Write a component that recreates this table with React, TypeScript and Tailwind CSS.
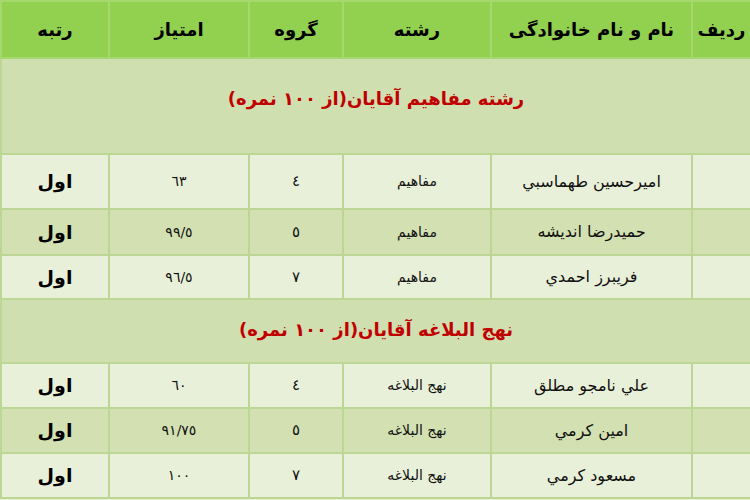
import React from "react";

const rows1 = [
  { name: "امیرحسین طهماسبي", field: "مفاهیم", group: "٤", score: "٦٣", rank: "اول", bg: "bg-[#e9f0d9]", h: "h-[55px]" },
  { name: "حمیدرضا اندیشه", field: "مفاهیم", group: "٥", score: "٩٩/٥", rank: "اول", bg: "bg-[#d2e0b2]", h: "h-[46px]" },
  { name: "فریبرز احمدي", field: "مفاهیم", group: "٧", score: "٩٦/٥", rank: "اول", bg: "bg-[#e9f0d9]", h: "h-[44px]" },
];
const rows2 = [
  { name: "علي نامجو مطلق", field: "نهج البلاغه", group: "٤", score: "٦٠", rank: "اول", bg: "bg-[#e9f0d9]", h: "h-[45px]" },
  { name: "امین کرمي", field: "نهج البلاغه", group: "٥", score: "٩١/٧٥", rank: "اول", bg: "bg-[#d2e0b2]", h: "h-[45px]" },
  { name: "مسعود کرمي", field: "نهج البلاغه", group: "٧", score: "١٠٠", rank: "اول", bg: "bg-[#e9f0d9]", h: "h-[45px]" },
];

const td = "border-2 border-[#bcd793] text-center align-middle p-0";

function DataRow({ r }: { r: (typeof rows1)[number] }) {
  return (
    <tr className={`${r.bg} ${r.h}`}>
      <td className={td}></td>
      <td className={`${td} text-[16px] text-[#111]`}>{r.name}</td>
      <td className={`${td} text-[14px] text-[#111]`}>{r.field}</td>
      <td className={`${td} text-[15px] text-[#111]`}>{r.group}</td>
      <td className={`${td} text-[14px] text-[#111]`}>{r.score}</td>
      <td className={`${td} text-[19px] font-bold text-black`}>{r.rank}</td>
    </tr>
  );
}

export default function App() {
  return (
    <div className="w-[750px] h-[500px] bg-[#e9f0d9] overflow-hidden" style={{ fontFamily: '"DejaVu Sans", sans-serif' }}>
      <table dir="rtl" className="w-[750px] border-collapse table-fixed border-2 border-[#c2dc9c]">
        <colgroup>
          <col className="w-[59px]" />
          <col className="w-[201px]" />
          <col className="w-[148px]" />
          <col className="w-[94px]" />
          <col className="w-[140px]" />
          <col className="w-[108px]" />
        </colgroup>
        <thead>
          <tr className="bg-[#92d050] h-[57px]">
            {["ردیف", "نام و نام خانوادگی", "رشته", "گروه", "امتیاز", "رتبه"].map((t) => (
              <th key={t} className="border-2 border-[#a6d870] text-center align-middle text-[18px] font-bold text-black p-0">
                {t}
              </th>
            ))}
          </tr>
        </thead>
        <tbody>
          <tr className="bg-[#d0dfb0] h-[96px]">
            <td colSpan={6} className={`${td} pb-[16px] text-[18px] font-bold text-[#c00000]`}>
              رشته مفاهیم آقایان(از ۱۰۰ نمره)
            </td>
          </tr>
          {rows1.map((r) => (
            <DataRow key={r.name} r={r} />
          ))}
          <tr className="bg-[#d0dfb0] h-[64px]">
            <td colSpan={6} className={`${td} pb-[4px] text-[18px] font-bold text-[#c00000]`}>
              نهج البلاغه آقایان(از ۱۰۰ نمره)
            </td>
          </tr>
          {rows2.map((r) => (
            <DataRow key={r.name} r={r} />
          ))}
        </tbody>
      </table>
    </div>
  );
}
